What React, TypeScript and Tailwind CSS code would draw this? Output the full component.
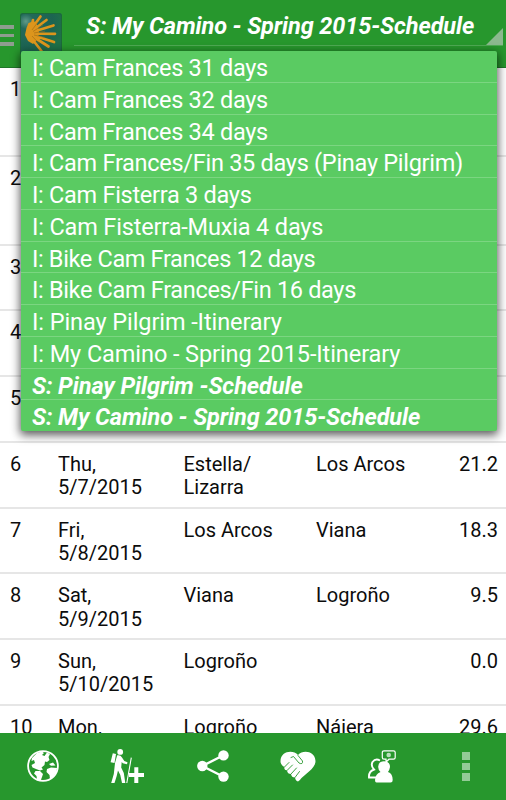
import React, { useState } from "react";

interface Stage {
  day: number;
  weekday: string;
  date: string;
  from: string;
  to: string;
  distance: string;
  tall?: boolean;
}

const STAGES: Stage[] = [
  { day: 1, weekday: "", date: "", from: "", to: "", distance: "", tall: true },
  { day: 2, weekday: "", date: "", from: "", to: "", distance: "", tall: true },
  { day: 3, weekday: "", date: "", from: "", to: "", distance: "" },
  { day: 4, weekday: "", date: "", from: "", to: "", distance: "" },
  { day: 5, weekday: "", date: "", from: "", to: "", distance: "" },
  { day: 6, weekday: "Thu,", date: "5/7/2015", from: "Estella/ Lizarra", to: "Los Arcos", distance: "21.2" },
  { day: 7, weekday: "Fri,", date: "5/8/2015", from: "Los Arcos", to: "Viana", distance: "18.3" },
  { day: 8, weekday: "Sat,", date: "5/9/2015", from: "Viana", to: "Logroño", distance: "9.5" },
  { day: 9, weekday: "Sun,", date: "5/10/2015", from: "Logroño", to: "", distance: "0.0" },
  { day: 10, weekday: "Mon,", date: "", from: "Logroño", to: "Nájera", distance: "29.6" },
];

const PLANS = [
  { name: "I: Cam Frances 31 days", style: "tracking-[-0.3px]" },
  { name: "I: Cam Frances 32 days", style: "tracking-[-0.3px]" },
  { name: "I: Cam Frances 34 days", style: "tracking-[-0.3px]" },
  { name: "I: Cam Frances/Fin 35 days (Pinay Pilgrim)", style: "tracking-[-0.28px]" },
  { name: "I: Cam Fisterra 3 days", style: "tracking-[-0.28px]" },
  { name: "I: Cam Fisterra-Muxia 4 days", style: "tracking-[-0.16px]" },
  { name: "I: Bike Cam Frances 12 days", style: "tracking-[-0.35px]" },
  { name: "I: Bike Cam Frances/Fin 16 days", style: "tracking-[-0.33px]" },
  { name: "I: Pinay Pilgrim -Itinerary", style: "tracking-[-0.08px]" },
  { name: "I: My Camino - Spring 2015-Itinerary", style: "tracking-[-0.08px]" },
  { name: "S: Pinay Pilgrim -Schedule", style: "font-bold italic tracking-[-0.08px]" },
  { name: "S: My Camino - Spring 2015-Schedule", style: "font-bold italic tracking-[-0.1px]" },
];

function ShellLogo() {
  return (
    <svg width="42" height="42" viewBox="0 0 42 42" className="shrink-0">
      <defs>
        <radialGradient id="tile" cx="0.14" cy="0.2" r="0.9">
          <stop offset="0" stopColor="#5f9a88" />
          <stop offset="0.2" stopColor="#23695a" />
          <stop offset="0.7" stopColor="#1c6452" />
          <stop offset="1" stopColor="#1f7048" />
        </radialGradient>
      </defs>
      <rect width="42" height="42" rx="2.5" fill="url(#tile)" />
      <rect x="0.5" y="0.5" width="41" height="41" rx="2.5" fill="none" stroke="#1c6a3a" />
      <g stroke="#dc951c" strokeWidth="2.7" strokeLinecap="round">
        <path d="M8 21 L20.5 3.5M9 20 L26.5 7M9 20 L33.5 12.5M9 20.5 L35 20.8M9 21 L34 29M9 21 L28.5 33.5M9 22 L21.5 38M10 20 L13 7" />
      </g>
      <path d="M5 22 L6.5 15 L8.5 10 L14 8 L18 13 L19 20 L17 27 L13 31 L8 28Z" fill="#dc951c" />
      <path d="M12 17 L18 9M13 18.5 L23 12M14 20 L25 18.2M14 22 L25 24.5M12 23 L19.5 31" stroke="#9c6a16" strokeWidth="0.6" />
    </svg>
  );
}

function GlobeIcon() {
  return (
    <svg width="32" height="32" viewBox="0 0 32 32" fill="white">
      <circle cx="16" cy="16" r="14.9" fill="none" stroke="white" strokeWidth="1.8" />
      <path d="M5 8 L10 3 L15 1.5 L17 3 L15 5 L17.5 6 L20 2.5 L23 4 L21.5 7 L22.5 10 L20 12 L18 11.5 L17.5 15 L14.5 17.5 L16 19.5 L13 20.5 L9 19 L5.5 17.5 L4.5 15 L8 13 L7 10 L4.5 11Z" />
      <path d="M8.5 21 L13 21 L16 24 L15 27 L13.5 31 L10 29.5 L9.5 26 L7 23.5Z" />
      <path d="M20 19 L24 17.5 L30 18 L29.5 22 L26 27 L23 29 L22.5 25 L19.5 22Z" />
      <path d="M22 14 L26 12.5 L28.5 15.5 L24 15.8Z" />
    </svg>
  );
}

function HikerIcon() {
  return (
    <svg width="34" height="34" viewBox="0 0 34 34" fill="white">
      <circle cx="10.2" cy="2.9" r="2.9" />
      <path d="M2.8 4.2 L6 5 L4.5 14 L0.6 13.2Z" />
      <path d="M7.2 6.3 Q10.5 5.5 12 8.5 L14.3 12 L17.5 13.2 L17 15.2 L12.8 14.3 L11.7 13 L11.2 18.5 L13.8 24 L15.3 34 L12 34 L10.3 26 L8 21.5 L6.7 27 L4.5 34 L1.2 34 L3.8 25 L5 14Z" />
      <path d="M21.3 8.7 L16.8 34" stroke="white" strokeWidth="1.1" />
      <path d="M24.3 18.2 H28.3 V24 H34 V28 H28.3 V34 H24.3 V28 H19 V24 H24.3Z" />
    </svg>
  );
}

function ShareIcon() {
  return (
    <svg width="32" height="32" viewBox="0 0 32 32" fill="white">
      <path d="M26.5 5.3 L5.3 16 L26.5 26.7" fill="none" stroke="white" strokeWidth="2.4" />
      <circle cx="5.3" cy="16" r="5.2" />
      <circle cx="26.5" cy="5.4" r="5.2" />
      <circle cx="26.5" cy="26.6" r="5.2" />
    </svg>
  );
}

function HeartHandsIcon() {
  return (
    <svg width="36" height="31" viewBox="0 0 36 31">
      <path
        d="M18 4 C13 -1.5 0.5 0 0.5 10.5 C0.5 13 2.5 15 4.5 16 Q3.5 19 7 19.5 Q7.5 23 11 23 Q11.5 26.5 15 26.5 Q15.5 30 18 30.5 Q19.5 30 21.5 27 L29 20.5 C33 17 35.5 14 35.5 10 C35 0 23 -1.5 18 4Z"
        fill="white"
      />
      <g fill="none" stroke="#27972d" strokeWidth="0.9" strokeLinecap="round">
        <path d="M4.5 16 L9 11.5M7 19.5 L12.5 14M11 23 L16.5 17M15 26.5 L19.5 20.5" />
        <path d="M11 6.5 L13.5 5.5 L19 12 Q23 14 22.5 10 L18 4.5" />
      </g>
    </svg>
  );
}

function PeopleIcon() {
  return (
    <svg width="28" height="33" viewBox="0 0 28 33">
      <path
        d="M8 27.5 H1 Q0.5 21.5 6 19.5 Q2.5 16 4.5 12 Q7.5 8 12 10.5"
        fill="none"
        stroke="white"
        strokeWidth="1.9"
      />
      <path
        d="M16 11.2 Q22 11.5 22 17 Q21.5 20 20 22 Q24.7 23.5 24.7 30 Q24.7 32.5 22.5 32.5 H8.5 Q7 32.5 7 30 Q7.3 24 12.5 22 Q10 19.5 10.2 16.5 Q10.5 11.3 16 11.2Z"
        fill="white"
      />
      <path
        d="M16 0.8 H25.5 Q27.2 0.8 27.2 2.5 V7.5 Q27.2 9.2 25.5 9.2 H21 L18 12 V9.2 H16 Q14.3 9.2 14.3 7.5 V2.5 Q14.3 0.8 16 0.8Z"
        fill="none"
        stroke="white"
        strokeWidth="1.2"
      />
      <circle cx="20.7" cy="5" r="2.3" fill="#b9dfbb" />
    </svg>
  );
}

export default function App() {
  const [open, setOpen] = useState(true);
  const [selected, setSelected] = useState(PLANS[11].name);

  const handleSelect = (name: string) => {
    setSelected(name);
    setOpen(false);
  };

  return (
    <main className="relative flex h-[800px] w-[506px] flex-col overflow-hidden bg-white font-[Roboto,sans-serif]">
      {/* Action bar */}
      <header className="flex h-[67.5px] shrink-0 items-start border-b border-[#20762a] bg-[#27972d]">
        <div className="mt-[25px] flex w-[14px] flex-col gap-[5px]">
          <span className="h-[3.5px] bg-[#8f9d8f]" />
          <span className="h-[3.5px] bg-[#8f9d8f]" />
          <span className="h-[3.5px] bg-[#8f9d8f]" />
        </div>
        <div className="ml-[6px] mt-[13px]">
          <ShellLogo />
        </div>
        <button
          onClick={() => setOpen(!open)}
          className="ml-[12px] flex h-[46px] w-[429px] items-start border-b border-[#4fab54] text-left"
        >
          <span className="ml-[12px] mt-[12px] grow whitespace-nowrap text-[23.5px] font-bold italic leading-[28px] tracking-[-0.1px] text-white">
            {selected}
          </span>
          <svg width="17" height="17" viewBox="0 0 17 17" className="shrink-0 self-end">
            <path d="M17 0 V17 H0Z" fill="#8bb98e" />
          </svg>
        </button>
      </header>

      {/* Stages */}
      <section className="min-h-0 grow overflow-hidden">
        {STAGES.map((stage) => (
          <div
            key={stage.day}
            className={`flex border-b-2 border-[#e6e6e6] pt-[10px] text-[20px] leading-[23.4px] text-[#0c0c0c] ${
              stage.tall ? "h-[89px]" : "h-[65.75px]"
            }`}
          >
            <span className="w-[48px] shrink-0 pl-[10px]">{stage.day}</span>
            <span className="w-[125.5px] shrink-0 pl-[10px]">
              {stage.weekday}
              <br />
              {stage.date}
            </span>
            <span className="w-[132.5px] shrink-0 pl-[10px]">{stage.from}</span>
            <span className="w-[120px] shrink-0 pl-[10px]">{stage.to}</span>
            <span className="grow pr-[8px] text-right">{stage.distance}</span>
          </div>
        ))}
      </section>

      {/* Bottom bar */}
      <nav className="-mr-[2px] flex h-[67.5px] shrink-0 items-center bg-[#27972d] pl-[1px]">
        <button className="flex flex-1 justify-center">
          <GlobeIcon />
        </button>
        <button className="flex flex-1 justify-center pr-[2px]">
          <HikerIcon />
        </button>
        <button className="flex flex-1 justify-center">
          <ShareIcon />
        </button>
        <button className="flex flex-1 justify-center">
          <HeartHandsIcon />
        </button>
        <button className="flex flex-1 justify-center">
          <PeopleIcon />
        </button>
        <button className="flex flex-1 flex-col items-center gap-[3px]">
          <span className="size-[7.5px] bg-[#93cb96]" />
          <span className="size-[7.5px] bg-[#93cb96]" />
          <span className="size-[7.5px] bg-[#93cb96]" />
        </button>
      </nav>

      {/* Plan dropdown */}
      {open && (
        <ul className="absolute left-[20.5px] top-[51px] w-[476.5px] rounded-[2px] bg-[#5acb62] shadow-[0_3px_10px_1px_rgba(0,0,0,0.65)]">
          {PLANS.map((plan) => (
            <li
              key={plan.name}
              onClick={() => handleSelect(plan.name)}
              className={`h-[31.75px] whitespace-nowrap border-b border-[#7bd681] pl-[11.5px] pt-[3px] text-[23.5px] leading-[28px] text-white last:h-[31px] last:border-b-0 ${plan.style}`}
            >
              {plan.name}
            </li>
          ))}
        </ul>
      )}
    </main>
  );
}
